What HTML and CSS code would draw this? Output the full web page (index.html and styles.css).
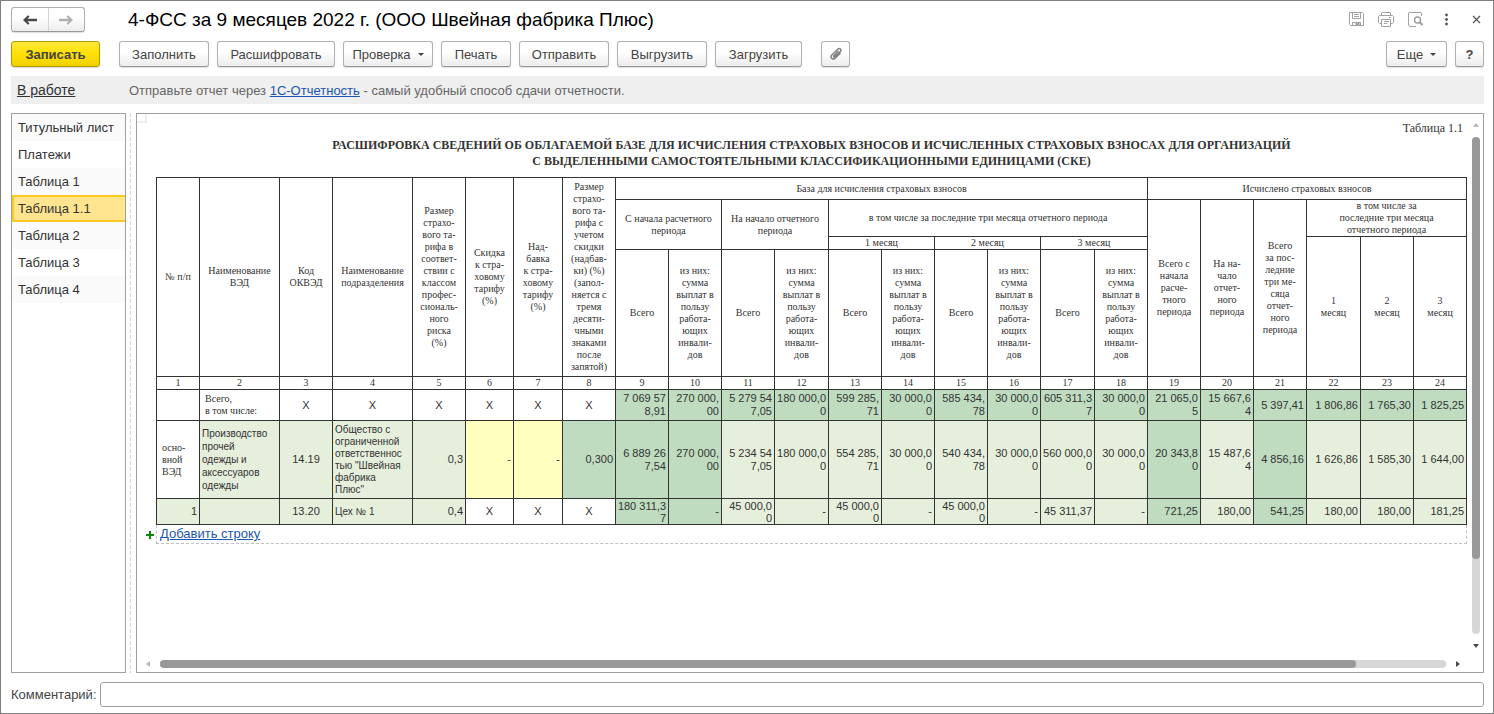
FILE: index.html
```html
<!DOCTYPE html>
<html lang="ru">
<head>
<meta charset="utf-8">
<title>4-ФСС за 9 месяцев 2022 г.</title>
<link rel="stylesheet" href="styles.css">
</head>
<body>
<div class="window">
  <header class="titlebar">
    <div class="nav">
      <button class="nav-btn" type="button" aria-label="Назад"><svg width="14" height="10" viewBox="0 0 14 10"><path d="M0 5 5 0.200 6.500 1.500 4.500 3.800H14V6.200H4.500L6.500 8.500 5 9.800Z" fill="#4a4a4a"/></svg></button>
      <button class="nav-btn nav-btn-next" type="button" aria-label="Вперед"><svg width="14" height="10" viewBox="0 0 14 10"><path d="M14 5 9 0.200 7.500 1.500 9.500 3.800H0V6.200H9.500L7.500 8.500 9 9.800Z" fill="#b0b0b0"/></svg></button>
    </div>
    <h1 class="title">4-ФСС за 9 месяцев 2022 г. (ООО Швейная фабрика Плюс)</h1>
    <div class="window-tools">
      <button class="tool" type="button" aria-label="Сохранить"><svg width="16" height="16" viewBox="0 0 16 16" fill="none" stroke="#a0a0a0"><path d="M1.500.500H14.500L15.500 1.500V13.500H2.500L1.500 12.500Z"/><path d="M4.500.500V6.500H12.500V.500M6 2.500H11M6 4.500H11M4.500 13.500V10.500H12.500V13.500"/><path d="M8 11H11V13H8Z" fill="#a0a0a0"/></svg></button>
      <button class="tool" type="button" aria-label="Печать"><svg width="16" height="16" viewBox="0 0 16 16" fill="none" stroke="#a0a0a0"><path d="M3.500 3.500V1L4 .500H12L12.500 1V3.500M3.500 11.500H1.500L.500 10.500V4.500L1.500 3.500H14.500L15.500 4.500V10.500L14.500 11.500H12.500"/><path d="M3.500 7.500H12.500V14.500H3.500ZM6 9.500H11M6 11.500H9M11 5.500H13"/></svg></button>
      <button class="tool" type="button" aria-label="Просмотр"><svg width="16" height="16" viewBox="0 0 16 16" fill="none" stroke="#a0a0a0"><path d="M13.500 4V1L13 .500H1L.500 1V13L1.500 14.500H8"/><circle cx="9.500" cy="8" r="3" stroke-width="1.500"/><path d="M11.500 10 14.500 13" stroke-width="2.200"/></svg></button>
      <button class="tool" type="button" aria-label="Меню"><svg width="16" height="16" viewBox="0 0 16 16" fill="#555"><circle cx="8.500" cy="3" r="1.400"/><circle cx="8.500" cy="7.500" r="1.400"/><circle cx="8.500" cy="12" r="1.400"/></svg></button>
      <button class="tool" type="button" aria-label="Закрыть"><svg width="16" height="16" viewBox="0 0 16 16" stroke="#555" stroke-width="1.200"><path d="M5 4 12 11M12 4 5 11"/></svg></button>
    </div>
  </header>

  <div class="toolbar">
    <button class="btn btn-primary" type="button">Записать</button>
    <button class="btn btn-m" type="button">Заполнить</button>
    <button class="btn btn-l" type="button">Расшифровать</button>
    <button class="btn btn-m" type="button">Проверка<span class="caret"></span></button>
    <button class="btn btn-s" type="button">Печать</button>
    <button class="btn btn-m" type="button">Отправить</button>
    <button class="btn btn-m" type="button">Выгрузить</button>
    <button class="btn btn-load" type="button">Загрузить</button>
    <button class="btn btn-icon btn-clip" type="button" aria-label="Файлы"><svg width="14" height="14" viewBox="0 0 14 14" fill="none" stroke="#808080" stroke-width="1.500"><path d="M9.500 4 5 8.700C4.200 9.600 5.200 10.600 6.100 9.700L11.400 4.500C12.900 2.900 10.800.500 9 2L2.800 8C.700 10.200 3.400 13.500 5.800 11.400L11.500 6"/></svg></button>
    <button class="btn btn-more" type="button">Еще<span class="caret"></span></button>
    <button class="btn btn-icon btn-help" type="button">?</button>
  </div>

  <div class="banner">
    <a class="status" href="#">В работе</a>
    <p class="hint">Отправьте отчет через <a href="#">1С-Отчетность</a> - самый удобный способ сдачи отчетности.</p>
  </div>

  <main class="main">
    <nav class="sections">
      <a class="section" href="#">Титульный лист</a>
      <a class="section" href="#">Платежи</a>
      <a class="section" href="#">Таблица 1</a>
      <a class="section section-active" href="#">Таблица 1.1</a>
      <a class="section" href="#">Таблица 2</a>
      <a class="section" href="#">Таблица 3</a>
      <a class="section" href="#">Таблица 4</a>
    </nav>
    <div class="splitter"></div>
    <section class="panel">
      <div class="corner"></div>
      <div class="sheet">
        <p class="sheet-no">Таблица 1.1</p>
        <h2 class="sheet-title">РАСШИФРОВКА СВЕДЕНИЙ ОБ ОБЛАГАЕМОЙ БАЗЕ ДЛЯ ИСЧИСЛЕНИЯ СТРАХОВЫХ ВЗНОСОВ И ИСЧИСЛЕННЫХ СТРАХОВЫХ ВЗНОСАХ ДЛЯ ОРГАНИЗАЦИЙ<br>С ВЫДЕЛЕННЫМИ САМОСТОЯТЕЛЬНЫМИ КЛАССИФИКАЦИОННЫМИ ЕДИНИЦАМИ (СКЕ)</h2>
        <table class="grid">
          <colgroup>
            <col class="w43"><col class="w80"><col class="w53"><col class="w80"><col class="w53"><col class="w48"><col class="w49"><col class="w53">
            <col class="w53"><col class="w53"><col class="w53"><col class="w54"><col class="w53"><col class="w53"><col class="w53"><col class="w53">
            <col class="w54"><col class="w53"><col class="w53"><col class="w53"><col class="w53"><col class="w54"><col class="w53"><col class="w53">
          </colgroup>
          <thead>
            <tr class="h22">
              <th rowspan="4">№ п/п</th>
              <th rowspan="4">Наименование<br>ВЭД</th>
              <th rowspan="4">Код<br>ОКВЭД</th>
              <th rowspan="4">Наименование<br>подразделения</th>
              <th rowspan="4">Размер<br>страхо-<br>вого та-<br>рифа в<br>соответ-<br>ствии с<br>классом<br>профес-<br>сиональ-<br>ного<br>риска<br>(%)</th>
              <th rowspan="4">Скидка<br>к стра-<br>ховому<br>тарифу<br>(%)</th>
              <th rowspan="4">Над-<br>бавка<br>к стра-<br>ховому<br>тарифу<br>(%)</th>
              <th rowspan="4">Размер<br>страхо-<br>вого та-<br>рифа с<br>учетом<br>скидки<br>(надбав-<br>ки) (%)<br>(запол-<br>няется с<br>тремя<br>десяти-<br>чными<br>знаками<br>после<br>запятой)</th>
              <th colspan="10">База для исчисления страховых взносов</th>
              <th colspan="6">Исчислено страховых взносов</th>
            </tr>
            <tr class="h37">
              <th colspan="2" rowspan="2">С начала расчетного<br>периода</th>
              <th colspan="2" rowspan="2">На начало отчетного<br>периода</th>
              <th colspan="6">в том числе за последние три месяца отчетного периода</th>
              <th rowspan="3">Всего с<br>начала<br>расче-<br>тного<br>периода</th>
              <th rowspan="3">На на-<br>чало<br>отчет-<br>ного<br>периода</th>
              <th rowspan="3">Всего<br>за пос-<br>ледние<br>три ме-<br>сяца<br>отчет-<br>ного<br>периода</th>
              <th colspan="3">в том числе за<br>последние три месяца<br>отчетного периода</th>
            </tr>
            <tr class="h13">
              <th colspan="2">1 месяц</th>
              <th colspan="2">2 месяц</th>
              <th colspan="2">3 месяц</th>
              <th rowspan="2">1<br>месяц</th>
              <th rowspan="2">2<br>месяц</th>
              <th rowspan="2">3<br>месяц</th>
            </tr>
            <tr class="h127">
              <th>Всего</th>
              <th>из них:<br>сумма<br>выплат в<br>пользу<br>работа-<br>ющих<br>инвали-<br>дов</th>
              <th>Всего</th>
              <th>из них:<br>сумма<br>выплат в<br>пользу<br>работа-<br>ющих<br>инвали-<br>дов</th>
              <th>Всего</th>
              <th>из них:<br>сумма<br>выплат в<br>пользу<br>работа-<br>ющих<br>инвали-<br>дов</th>
              <th>Всего</th>
              <th>из них:<br>сумма<br>выплат в<br>пользу<br>работа-<br>ющих<br>инвали-<br>дов</th>
              <th>Всего</th>
              <th>из них:<br>сумма<br>выплат в<br>пользу<br>работа-<br>ющих<br>инвали-<br>дов</th>
            </tr>
            <tr class="h13">
              <th>1</th><th>2</th><th>3</th><th>4</th><th>5</th><th>6</th><th>7</th><th>8</th><th>9</th><th>10</th><th>11</th><th>12</th>
              <th>13</th><th>14</th><th>15</th><th>16</th><th>17</th><th>18</th><th>19</th><th>20</th><th>21</th><th>22</th><th>23</th><th>24</th>
            </tr>
          </thead>
          <tbody>
            <tr class="h31">
              <td></td>
              <td class="label">Всего,<br>в том числе:</td>
              <td class="mid">X</td><td class="mid">X</td><td class="mid">X</td><td class="mid">X</td><td class="mid">X</td><td class="mid">X</td>
              <td class="sum">7 069 57<br>8,91</td>
              <td class="sum">270 000,<br>00</td>
              <td class="sum">5 279 54<br>7,05</td>
              <td class="sum">180 000,0<br>0</td>
              <td class="sum">599 285,<br>71</td>
              <td class="sum">30 000,0<br>0</td>
              <td class="sum">585 434,<br>78</td>
              <td class="sum">30 000,0<br>0</td>
              <td class="sum">605 311,3<br>7</td>
              <td class="sum">30 000,0<br>0</td>
              <td class="sum">21 065,0<br>5</td>
              <td class="sum">15 667,6<br>4</td>
              <td class="sum">5 397,41</td>
              <td class="sum">1 806,86</td>
              <td class="sum">1 765,30</td>
              <td class="sum">1 825,25</td>
            </tr>
            <tr class="h78">
              <td class="label">осно-<br>вной<br>ВЭД</td>
              <td class="edit text">Производство<br>прочей<br>одежды и<br>аксессуаров<br>одежды</td>
              <td class="edit mid">14.19</td>
              <td class="edit text dense">Общество с<br>ограниченной<br>ответственнос<br>тью "Швейная<br>фабрика<br>Плюс"</td>
              <td class="edit">0,3</td>
              <td class="pick">-</td>
              <td class="pick">-</td>
              <td class="sum">0,300</td>
              <td class="sum">6 889 26<br>7,54</td>
              <td class="sum">270 000,<br>00</td>
              <td class="edit">5 234 54<br>7,05</td>
              <td class="edit">180 000,0<br>0</td>
              <td class="edit">554 285,<br>71</td>
              <td class="edit">30 000,0<br>0</td>
              <td class="edit">540 434,<br>78</td>
              <td class="edit">30 000,0<br>0</td>
              <td class="edit">560 000,0<br>0</td>
              <td class="edit">30 000,0<br>0</td>
              <td class="sum">20 343,8<br>0</td>
              <td class="edit">15 487,6<br>4</td>
              <td class="sum">4 856,16</td>
              <td class="edit">1 626,86</td>
              <td class="edit">1 585,30</td>
              <td class="edit">1 644,00</td>
            </tr>
            <tr class="h26">
              <td class="edit">1</td>
              <td class="edit"></td>
              <td class="edit mid">13.20</td>
              <td class="edit text">Цех № 1</td>
              <td class="edit">0,4</td>
              <td class="mid">X</td><td class="mid">X</td><td class="mid">X</td>
              <td class="sum dense">180 311,3<br>7</td>
              <td class="sum">-</td>
              <td class="edit dense">45 000,0<br>0</td>
              <td class="edit">-</td>
              <td class="edit dense">45 000,0<br>0</td>
              <td class="edit">-</td>
              <td class="edit dense">45 000,0<br>0</td>
              <td class="edit">-</td>
              <td class="edit">45 311,37</td>
              <td class="edit">-</td>
              <td class="sum">721,25</td>
              <td class="edit">180,00</td>
              <td class="sum">541,25</td>
              <td class="edit">180,00</td>
              <td class="edit">180,00</td>
              <td class="edit">181,25</td>
            </tr>
          </tbody>
        </table>
        <div class="add-row">
          <svg class="plus" width="8" height="8" viewBox="0 0 8 8"><path d="M3 0H5V3H8V5H5V8H3V5H0V3H3Z" fill="#0a870a"/></svg>
          <div class="add-box"><a href="#">Добавить строку</a></div>
        </div>
      </div>
      <div class="vscroll">
        <svg width="6" height="4" viewBox="0 0 6 4"><path d="M3 0 6 4H0Z" fill="#b8b8b8"/></svg>
        <div class="track"><div class="thumb"></div></div>
        <svg width="6" height="4" viewBox="0 0 6 4"><path d="M0 0H6L3 4Z" fill="#4a4a4a"/></svg>
      </div>
      <div class="hscroll">
        <svg width="4" height="6" viewBox="0 0 4 6"><path d="M4 0V6L0 3Z" fill="#b8b8b8"/></svg>
        <div class="track"><div class="thumb"></div></div>
        <svg width="4" height="6" viewBox="0 0 4 6"><path d="M0 0 4 3 0 6Z" fill="#4a4a4a"/></svg>
      </div>
    </section>
  </main>

  <footer class="comment">
    <label for="comment">Комментарий:</label>
    <input id="comment" type="text">
  </footer>
</div>
</body>
</html>
```

FILE: styles.css
```css
* { box-sizing: border-box; }

body {
  margin: 0;
  font-family: "Liberation Sans", Arial, sans-serif;
  font-size: 13px;
  color: #333;
  background: #fff;
}

button, input { font: inherit; color: inherit; }
h1, h2, p { margin: 0; font-weight: normal; }
svg { display: block; flex: none; }

.window {
  display: flex;
  flex-direction: column;
  height: 100vh;
  padding: 6px 9px 6px 10px;
  border: 1px solid #808080;
}

.titlebar { display: flex; align-items: center; height: 25px; }

.nav {
  display: flex;
  width: 74px;
  height: 25px;
  border: 1px solid #b0b0b0;
  border-bottom-color: #999;
  border-radius: 3px;
  background: linear-gradient(#fff 40%, #ececec);
  box-shadow: 0 1px 1px #ddd;
}

.nav-btn {
  display: flex;
  flex: 1;
  align-items: center;
  justify-content: center;
  padding: 0;
  border: 0;
  background: none;
}

.nav-btn-next { border-left: 1px solid #d4d4d4; }

.title {
  flex: 1;
  margin-left: 43px;
  font-size: 19px;
  line-height: 24px;
  color: #000;
}

.window-tools { display: flex; gap: 14px; }

.tool { padding: 0; border: 0; background: none; }

.toolbar { display: flex; gap: 8px; margin-top: 9px; }

.btn {
  display: flex;
  align-items: center;
  justify-content: center;
  height: 26px;
  padding: 0 6px;
  border: 1px solid #b0b0b0;
  border-bottom-color: #999;
  border-radius: 3px;
  background: linear-gradient(#fff 40%, #ececec);
  box-shadow: 0 1px 1px #ddd;
  color: #444;
  white-space: nowrap;
}

.btn-primary {
  width: 89px;
  margin-right: 11px;
  border-color: #b39800;
  background: linear-gradient(#ffea3d, #ffe000 50%, #f0d000);
  font-weight: bold;
}

.btn-s { width: 70px; }
.btn-m { width: 90px; }
.btn-l { width: 118px; }
.btn-load { width: 87px; }
.btn-icon { width: 29px; padding: 0; }
.btn-clip { margin-left: 11px; }
.btn-more { width: 61px; margin-left: auto; }
.btn-help { font-weight: bold; }

.caret {
  margin-left: 7px;
  border: 3px solid transparent;
  border-top-color: #444;
  border-bottom: 0;
}

.banner {
  display: flex;
  align-items: center;
  height: 28px;
  margin-top: 9px;
  padding-left: 6px;
  background: #efefef;
}

.status { width: 112px; font-size: 14px; color: #333; }
.hint { color: #666; }
.hint a, .add-box a { color: #1a56b0; }

.main {
  display: flex;
  flex: 1;
  min-height: 0;
  margin-top: 9px;
}

.sections {
  width: 115px;
  border: 1px solid #a0a0a0;
}

.section {
  display: block;
  height: 27px;
  padding-left: 6px;
  line-height: 27px;
  color: #333;
  text-decoration: none;
}

.section:nth-child(odd) { background: #fafafa; }

.section-active {
  padding-left: 4px;
  border: 2px solid #fbc91f;
  border-right: 0;
  background: #ffe58f;
  line-height: 23px;
}

.splitter {
  width: 1px;
  margin: 0 5px 0 4px;
  background: repeating-linear-gradient(#d4d4d4 0 4px, #fff 4px 6px);
}

.panel {
  position: relative;
  display: grid;
  flex: 1;
  grid-template: minmax(0, 1fr) 16px / minmax(0, 1fr) 16px;
  min-width: 0;
  border: 1px solid #a0a0a0;
}

.corner {
  position: absolute;
  top: 0;
  left: 0;
  width: 10px;
  height: 9px;
  border: solid #eee;
  border-width: 0 2px 2px 0;
}

.sheet {
  padding: 8px 0 0 19px;
  overflow: hidden;
  font-family: "Liberation Serif", "Times New Roman", serif;
  font-size: 10px;
  line-height: 12px;
}

.sheet-no {
  padding-right: 4px;
  font-size: 12px;
  text-align: right;
}

.sheet-title {
  margin: 3px 0 8px;
  font-size: 12px;
  font-weight: bold;
  line-height: 16px;
  text-align: center;
  white-space: nowrap;
}

.grid {
  width: 100%;
  table-layout: fixed;
  border-collapse: collapse;
}

.grid th, .grid td {
  padding: 0;
  border: 1px solid #333;
  font-weight: normal;
  vertical-align: middle;
  white-space: nowrap;
}

.grid td {
  padding-right: 2px;
  font-family: "Liberation Sans", Arial, sans-serif;
  font-size: 11px;
  line-height: 13px;
  text-align: right;
}

.grid .mid { padding: 0; text-align: center; }
.grid .text { padding: 0 0 0 2px; font-size: 10px; text-align: left; }
.grid .label {
  padding-left: 5px;
  font-family: "Liberation Serif", "Times New Roman", serif;
  font-size: 10px;
  line-height: 12px;
  text-align: left;
}
.grid .dense { line-height: 12px; }

.grid .edit { background: #e6efdc; }
.grid .sum { background: #bfdcc0; }
.grid .pick { background: #ffffbf; }

.w43 { width: 43px; }
.w48 { width: 48px; }
.w49 { width: 49px; }
.w53 { width: 53px; }
.w54 { width: 54px; }
.w80 { width: 80px; }

.h13 { height: 13px; }
.h22 { height: 22px; }
.h26 { height: 26px; }
.h31 { height: 31px; }
.h37 { height: 37px; }
.h78 { height: 78px; }
.h127 { height: 127px; }

.add-row {
  display: flex;
  align-items: center;
  gap: 2px;
  margin-left: -10px;
  font-family: "Liberation Sans", Arial, sans-serif;
  font-size: 13px;
}

.add-box {
  flex: 1;
  height: 19px;
  padding-left: 3px;
  border: 1px dashed #c0c0c0;
  border-top: 0;
  line-height: 18px;
}

.track { flex: 1; border-radius: 4px; background: #d6d6d6; }
.thumb { border-radius: 4px; background: #999; }

.vscroll {
  display: flex;
  flex-direction: column;
  align-items: center;
  gap: 10px;
  padding: 9px 0 8px 2px;
}

.vscroll .track { width: 8px; }
.vscroll .thumb { height: 85%; }

.hscroll {
  display: flex;
  align-items: center;
  gap: 10px;
  padding: 0 7px 0 9px;
}

.hscroll .track { height: 8px; }
.hscroll .thumb { width: 93%; height: 8px; }

.comment {
  display: flex;
  align-items: center;
  gap: 3px;
  margin-top: 9px;
  color: #444;
}

.comment input {
  flex: 1;
  height: 25px;
  padding: 0 6px;
  border: 1px solid #a0a0a0;
  border-radius: 3px;
}
```
